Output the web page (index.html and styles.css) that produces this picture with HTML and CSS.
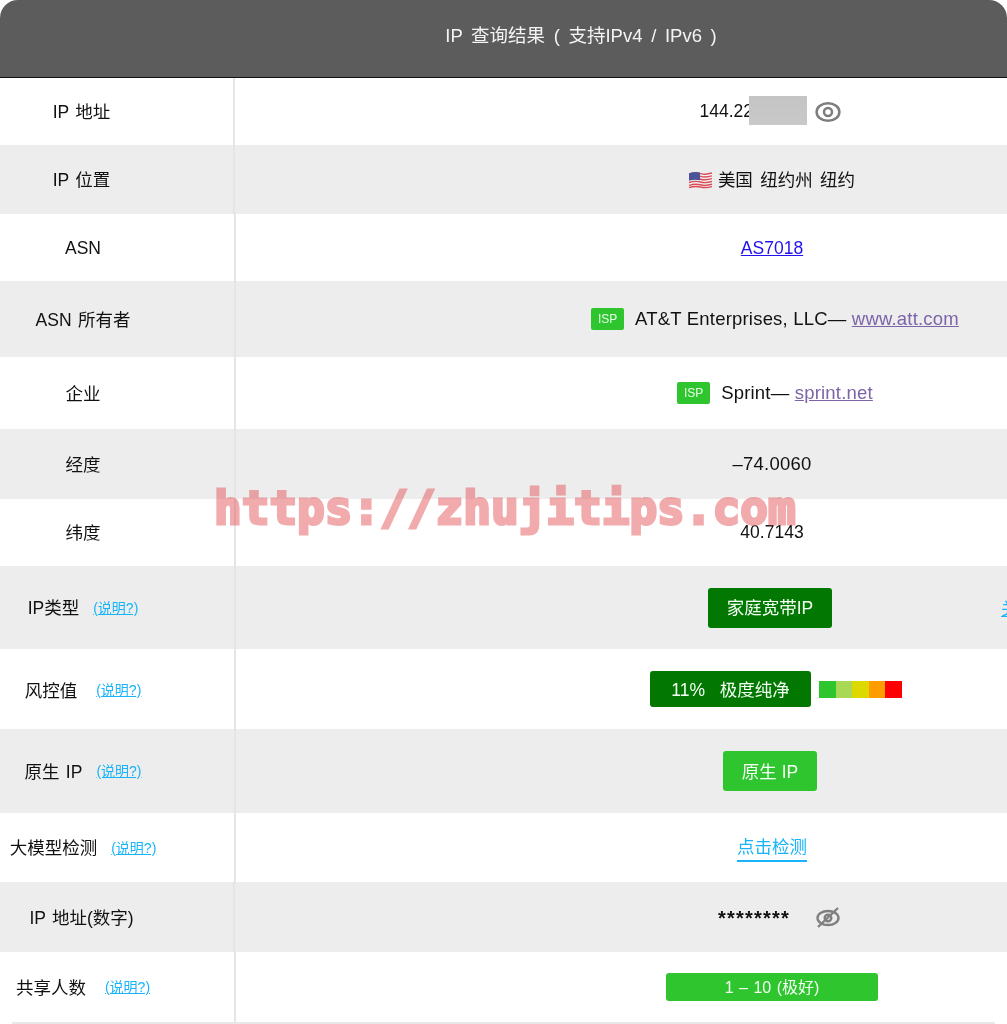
FILE: index.html
```html
<!DOCTYPE html>
<html lang="zh-CN">
<head>
<meta charset="utf-8">
<title>IP 查询结果</title>
<link rel="stylesheet" href="styles.css">
</head>
<body>
<main class="panel">
  <header class="head">IP 查询结果 ( 支持IPv4 / IPv6 )</header>

  <section class="row h67 narrow">
    <div class="label">IP 地址</div>
    <div class="value"><span class="masked">144.22<span class="mask"></span></span>
      <svg class="eye" viewBox="0 0 26 22"><ellipse cx="13" cy="11" rx="11.4" ry="8.8"/><circle cx="13" cy="11" r="4"/></svg>
    </div>
  </section>

  <section class="row h69 alt narrow">
    <div class="label">IP 位置</div>
    <div class="value">
      <svg class="flag" viewBox="0 0 23 18">
        <path d="M0 2.2Q6 .2 11.5 1.6T23 1V16Q17 17.6 11.5 16.4T0 17Z" fill="#eef0f2"/>
        <path d="M0 3.2Q6 1.2 11.5 2.6T23 2M0 6Q6 4 11.5 5.4T23 4.8M0 8.8Q6 6.8 11.5 8.2T23 7.6M0 11.6Q6 9.6 11.5 11T23 10.4M0 14.4Q6 12.4 11.5 13.8T23 13.2M0 16.6Q6 14.8 11.5 16T23 15.6" fill="none" stroke="#dc4b55" stroke-width="1.4"/>
        <path d="M0 2.2Q6 .2 11 1.5V9.2Q6 8 0 9.6Z" fill="#4b5499"/>
      </svg>
      <span class="place">美国 纽约州 纽约</span>
    </div>
  </section>

  <section class="row h67">
    <div class="label low">ASN</div>
    <div class="value low"><a class="link" href="#a">AS7018</a></div>
  </section>

  <section class="row h76 alt">
    <div class="label">ASN 所有者</div>
    <div class="value"><div class="ispline"><span class="isp">ISP</span><span class="latin">AT&amp;T Enterprises, LLC— <a class="visited" href="#b">www.att.com</a></span></div></div>
  </section>

  <section class="row h72">
    <div class="label">企业</div>
    <div class="value"><div class="ispline"><span class="isp">ISP</span><span class="latin">Sprint— <a class="visited" href="#c">sprint.net</a></span></div></div>
  </section>

  <section class="row h70 alt">
    <div class="label">经度</div>
    <div class="value"><span class="latin">–74.0060</span></div>
  </section>

  <section class="row h67">
    <div class="label">纬度</div>
    <div class="value">40.7143</div>
  </section>

  <section class="row h83 alt">
    <div class="label"><span>IP类型</span><a class="help" href="#d">(说明?)</a></div>
    <div class="value"><span class="tag dark type">家庭宽带IP</span><a class="side" href="#e">关于</a></div>
  </section>

  <section class="row h80">
    <div class="label mid"><span>风控值</span><a class="help wide" href="#f">(说明?)</a></div>
    <div class="value"><div class="riskline"><span class="tag dark risk">11%&nbsp;&nbsp; 极度纯净</span>
      <div class="scale"><i class="s1"></i><i class="s2"></i><i class="s3"></i><i class="s4"></i><i class="s5"></i></div></div>
    </div>
  </section>

  <section class="row h84 alt">
    <div class="label"><span>原生 IP</span><a class="help" href="#g">(说明?)</a></div>
    <div class="value"><span class="tag green native">原生 IP</span></div>
  </section>

  <section class="row h69">
    <div class="label"><span>大模型检测</span><a class="help" href="#h">(说明?)</a></div>
    <div class="value"><a class="check" href="#i">点击检测</a></div>
  </section>

  <section class="row h70 alt narrow">
    <div class="label">IP 地址(数字)</div>
    <div class="value"><div class="hiddenline"><span class="stars">********</span>
      <svg class="eye off" viewBox="0 0 24 21"><ellipse cx="12" cy="11" rx="10.5" ry="7"/><circle cx="12" cy="11" r="3.3"/><path d="M22 1 2 20"/></svg></div>
    </div>
  </section>

  <section class="row h70">
    <div class="label"><span>共享人数</span><a class="help wide" href="#j">(说明?)</a></div>
    <div class="value"><span class="tag green share">1 – 10 (极好)</span></div>
  </section>
  <div class="footline"></div>

  <div class="watermark">https://zhujitips.com</div>
</main>
</body>
</html>
```

FILE: styles.css
```css
* { box-sizing: border-box; }

html, body {
  margin: 0;
  height: 1024px;
  overflow: hidden;
  background: #fff;
}

body {
  font-family: "Liberation Sans", "Noto Sans CJK SC", sans-serif;
  font-size: 17.5px;
  color: #111;
}

.panel {
  position: relative;
  width: 1007px;
  overflow: hidden;
  background: #fff;
  filter: blur(0.35px);
}

.head {
  height: 78px;
  padding: 0 0 9px 155px;
  display: flex;
  align-items: center;
  justify-content: center;
  background: #5c5c5c;
  border-bottom: 1px solid #111;
  border-radius: 18px 18px 0 0;
  color: #f4f4f4;
  font-size: 18.5px;
  word-spacing: 3.5px;
}

.row {
  display: grid;
  grid-template-columns: 234px 1074px;
  background: #fff;
}
.row.narrow { grid-template-columns: 233px 1076px; }
.alt { background: #ededed; }

.h67 { height: 67px; }
.h69 { height: 69px; }
.h70 { height: 70px; }
.h72 { height: 72px; }
.h76 { height: 76px; }
.h80 { height: 80px; }
.h83 { height: 83px; }
.h84 { height: 84px; }

.footline {
  height: 2px;
  margin: 0 12px;
  background: #e8e8e8;
}

.label {
  display: flex;
  align-items: center;
  justify-content: center;
  width: 166px;
  padding-bottom: 2px;
  white-space: nowrap;
  word-spacing: 1.5px;
}
.narrow .label { width: 163px; }

.value {
  position: relative;
  display: flex;
  align-items: center;
  justify-content: center;
  border-left: 2px solid #e5e5e5;
  white-space: nowrap;
}

.label.low, .value.low { padding: 2px 0 0; }
.label.mid { padding: 0; }

.latin { font-size: 18.5px; letter-spacing: 0.2px; }

.help {
  margin-left: 14px;
  color: #18b4fa;
  font-size: 14px;
  word-spacing: 0;
}
.help.wide { margin-left: 19px; }

.link { color: #2211ee; }
.visited { color: #7c64a8; }

.masked { position: relative; width: 108px; }
.mask {
  position: absolute;
  left: 49px;
  top: -5px;
  width: 58px;
  height: 29px;
  background: linear-gradient(180deg, #c4c4c4, #c9c9c9);
}

.eye {
  fill: none;
  stroke: #7d7d7d;
  stroke-width: 2.5;
  width: 26px;
  height: 22px;
  margin: 0 4px 0 7px;
}

.flag { width: 23px; height: 18px; margin-right: 6px; }
.place { word-spacing: 2.5px; margin-bottom: 2px; }

.ispline { display: flex; align-items: center; margin-left: 6px; }

.isp {
  display: flex;
  align-items: center;
  justify-content: center;
  width: 33px;
  height: 22px;
  margin-right: 11px;
  border-radius: 2px;
  background: #2ec52e;
  color: #e8ffe8;
  font-size: 12px;
}

.tag {
  display: flex;
  align-items: center;
  justify-content: center;
  padding-bottom: 2px;
  border-radius: 3px;
  color: #f4fff4;
}
.dark { background: #027802; }
.green { background: #2ec52e; }

.type { width: 124px; height: 40px; margin-right: 4px; }
.riskline { display: flex; align-items: center; margin-left: 8px; }
.risk { width: 161px; height: 36px; margin-right: 8px; }
.native { width: 94px; height: 40px; margin-right: 4px; }
.share { width: 212px; height: 28px; font-size: 16px; word-spacing: 1px; }

.side {
  position: absolute;
  left: 765px;
  top: 29px;
  color: #18b4fa;
  text-decoration: underline;
}

.scale { display: flex; height: 17px; }
.scale i { width: 16.6px; }
.s1 { background: #2ec52e; }
.s2 { background: #a8d854; }
.s3 { background: #dcd800; }
.s4 { background: #ff9d00; }
.s5 { background: #ff0000; }

.check {
  color: #18b4fa;
  text-decoration: none;
  border-bottom: 2px solid #18b4fa;
  padding-bottom: 2px;
}

.hiddenline { display: flex; align-items: center; margin-left: 14px; }
.stars { margin-right: 26px; font-size: 20px; font-weight: 700; letter-spacing: 1.2px; padding-top: 2px; }
.eye.off { width: 24px; height: 21px; margin: 0; stroke: #808080; stroke-width: 2.4; }

.watermark {
  position: absolute;
  left: 214px;
  top: 481px;
  font-family: "DejaVu Sans Mono", monospace;
  font-weight: 700;
  font-size: 46px;
  line-height: 54px;
  color: #e25055;
  -webkit-text-stroke: 3px #e25055;
  filter: opacity(0.48);
  pointer-events: none;
}
```
